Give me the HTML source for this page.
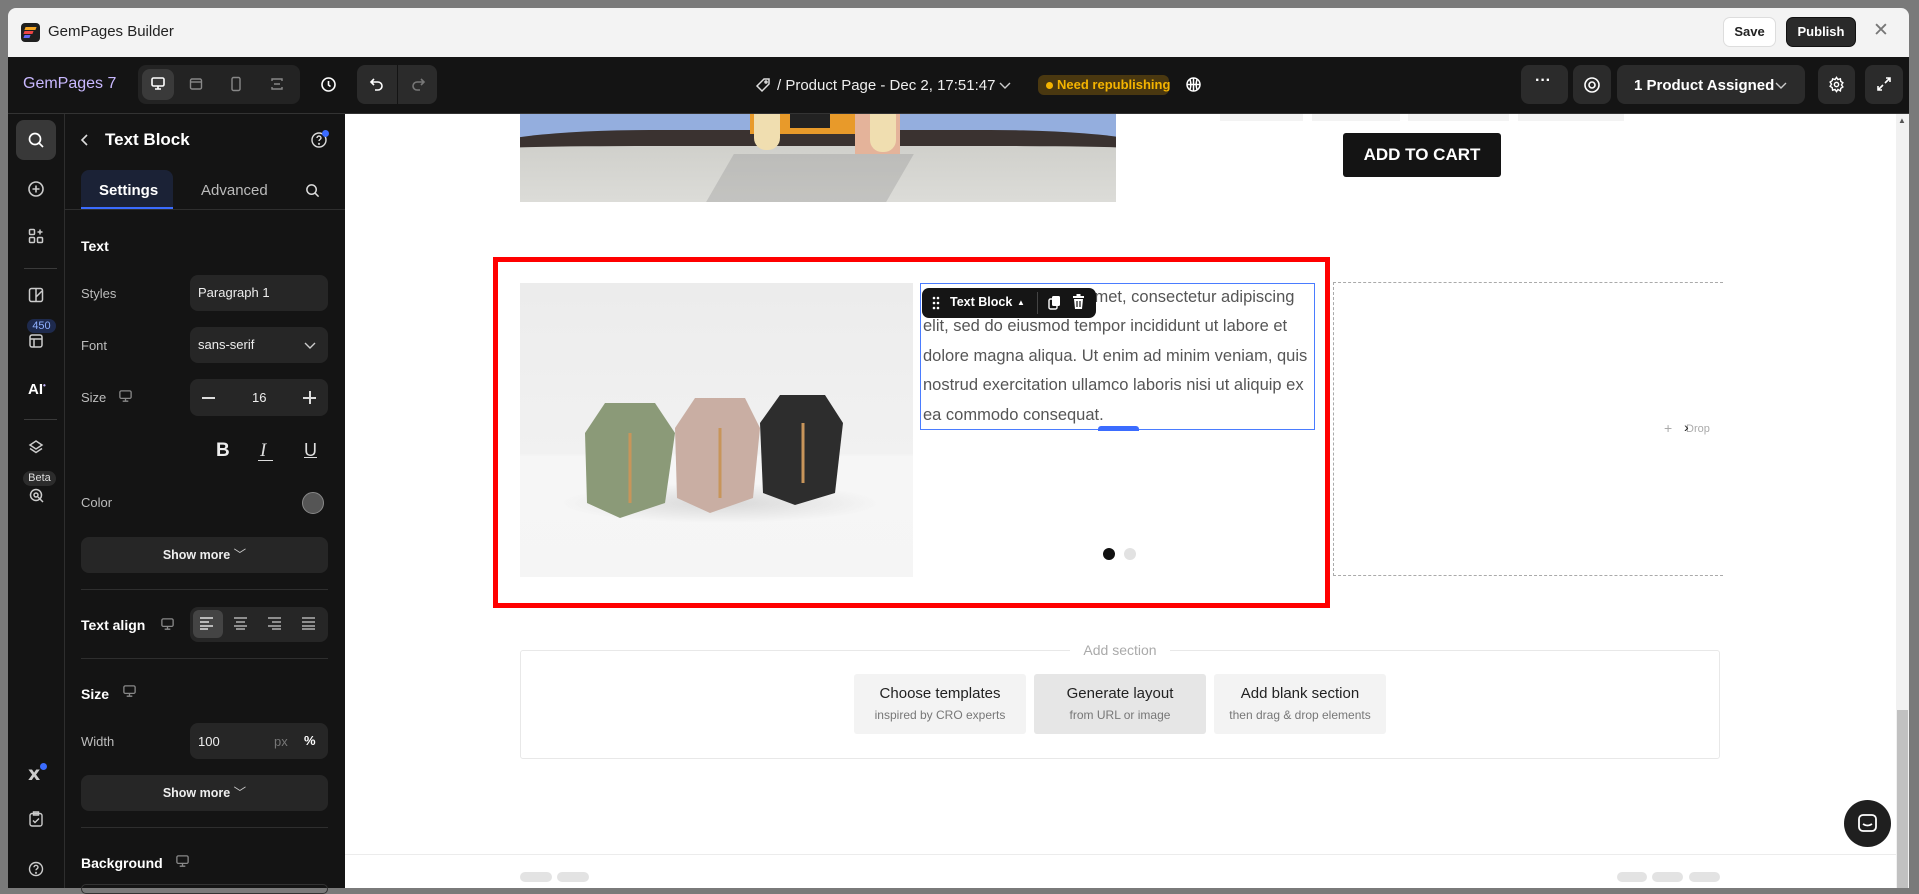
<!DOCTYPE html>
<html><head><meta charset="utf-8"><style>
*{box-sizing:border-box;margin:0;padding:0}
body{width:1919px;height:888px;overflow:hidden;background:#7a7a7a;font-family:"Liberation Sans",Arial,sans-serif;position:relative}
.a{position:absolute}
.t{position:absolute;white-space:nowrap}
.btn{position:absolute;background:#2b2b2b;border-radius:8px}
.ico{position:absolute}
.lbl{position:absolute;color:#bdbdbd;font-size:13px;white-space:nowrap}
.h{position:absolute;color:#fff;font-size:14px;font-weight:700;white-space:nowrap}
.inp{position:absolute;background:#262626;border-radius:8px;color:#eee;font-size:13px}
.div{position:absolute;left:81px;width:247px;height:1px;background:#2e2e2e}
</style></head><body>
<!-- title bar -->
<div class="a" style="left:8px;top:8px;width:1901px;height:49px;background:#f3f3f3;border-radius:8px 8px 0 0"></div>
<div class="a" style="left:21px;top:23px;width:19px;height:19px;background:#1f1f1f;border-radius:4px"></div>
<div class="a" style="left:25px;top:27px;width:11px;height:3px;background:#f5a623;transform:skewX(-20deg)"></div>
<div class="a" style="left:24px;top:31px;width:9px;height:3px;background:#ef4444;transform:skewX(-20deg)"></div>
<div class="a" style="left:24px;top:35px;width:6px;height:3px;background:#6366f1;transform:skewX(-20deg)"></div>
<div class="t" style="left:48px;top:23px;font-size:15px;color:#222;font-weight:500">GemPages Builder</div>
<div class="a" style="left:1723px;top:17px;width:53px;height:30px;background:#fff;border:1px solid #ddd;border-radius:7px;font-size:13px;font-weight:700;color:#222;text-align:center;line-height:28px">Save</div>
<div class="a" style="left:1786px;top:17px;width:70px;height:30px;background:#2a2a2a;border:1px solid #111;border-radius:7px;font-size:13px;font-weight:700;color:#fff;text-align:center;line-height:28px">Publish</div>
<div class="t" style="left:1873px;top:19px;font-size:19px;color:#777">✕</div>
<!-- toolbar -->
<div class="a" style="left:8px;top:57px;width:1901px;height:57px;background:#141414;border-bottom:1px solid #333"></div>
<div class="t" style="left:23px;top:75px;font-size:16px;color:#c9b8ff">GemPages 7</div>
<div class="btn" style="left:138px;top:65px;width:162px;height:39px;background:#232323"></div>
<div class="btn" style="left:142px;top:69px;width:32px;height:31px;background:#3a3a3a"></div>
<svg class="ico" style="left:150px;top:76px" width="16" height="16" viewBox="0 0 16 16" fill="none" stroke="#fff" stroke-width="1.6"><rect x="2" y="2" width="12" height="8" rx="1.5"/><path d="M5 13h6M8 10v3"/></svg>
<svg class="ico" style="left:189px;top:77px" width="14" height="14" viewBox="0 0 14 14" fill="none" stroke="#888" stroke-width="1.4"><rect x="1.5" y="2" width="11" height="10" rx="1.5"/><path d="M1.5 5h11"/></svg>
<svg class="ico" style="left:230px;top:76px" width="12" height="16" viewBox="0 0 12 16" fill="none" stroke="#888" stroke-width="1.4"><rect x="2" y="1.5" width="8" height="13" rx="1.5"/></svg>
<svg class="ico" style="left:270px;top:77px" width="14" height="14" viewBox="0 0 14 14" fill="none" stroke="#888" stroke-width="1.4"><path d="M2 4V2h10v2M2 10v2h10v-2M4 7h6"/></svg>
<svg class="ico" style="left:320px;top:76px" width="17" height="17" viewBox="0 0 17 17" fill="none" stroke="#fff" stroke-width="1.6"><circle cx="8.5" cy="8.5" r="6.5"/><path d="M8.5 5v4l2 1.5"/></svg>
<div class="btn" style="left:357px;top:65px;width:80px;height:39px"></div>
<div class="a" style="left:397px;top:65px;width:1px;height:39px;background:#141414"></div>
<svg class="ico" style="left:369px;top:77px" width="16" height="16" viewBox="0 0 16 16" fill="none" stroke="#fff" stroke-width="1.6"><path d="M5 2L2 5l3 3M2 5h7a4 4 0 010 8H6"/></svg>
<svg class="ico" style="left:410px;top:77px" width="16" height="16" viewBox="0 0 16 16" fill="none" stroke="#777" stroke-width="1.6"><path d="M11 2l3 3-3 3M14 5H7a4 4 0 000 8h3"/></svg>
<svg class="ico" style="left:755px;top:77px" width="16" height="16" viewBox="0 0 16 16" fill="none" stroke="#ddd" stroke-width="1.5"><path d="M9 2h5v5l-7 7-5-5z"/><circle cx="11" cy="5" r="1"/></svg>
<div class="t" style="left:777px;top:77px;font-size:15px;color:#eee">/ Product Page - Dec 2, 17:51:47</div>
<svg class="ico" style="left:999px;top:80px" width="12" height="10" viewBox="0 0 12 10" fill="none" stroke="#ccc" stroke-width="1.4"><path d="M1 3l5 5 5-5"/></svg>
<div class="a" style="left:1038px;top:75px;width:131px;height:20px;background:#4a3810;border-radius:6px"></div>
<div class="a" style="left:1046px;top:82px;width:7px;height:7px;background:#f5b400;border-radius:50%"></div>
<div class="t" style="left:1057px;top:77px;font-size:13px;color:#f5b400;font-weight:600">Need republishing</div>
<svg class="ico" style="left:1185px;top:76px" width="17" height="17" viewBox="0 0 17 17" fill="none" stroke="#fff" stroke-width="1.5"><circle cx="8.5" cy="8.5" r="6.5"/><path d="M2 8.5h13M8.5 2v13M5 3.5c1 3 1 7 0 10M12 3.5c-1 3-1 7 0 10"/></svg>
<div class="btn" style="left:1521px;top:65px;width:47px;height:39px"></div>
<div class="t" style="left:1535px;top:72px;font-size:16px;color:#fff;font-weight:700">···</div>
<div class="btn" style="left:1573px;top:65px;width:38px;height:39px"></div>
<svg class="ico" style="left:1583px;top:76px" width="18" height="18" viewBox="0 0 18 18" fill="none" stroke="#fff" stroke-width="1.6"><circle cx="9" cy="9" r="7"/><circle cx="9" cy="9" r="3"/></svg>
<div class="btn" style="left:1617px;top:65px;width:188px;height:39px"></div>
<div class="t" style="left:1634px;top:77px;font-size:15px;color:#fff;font-weight:600">1 Product Assigned</div>
<svg class="ico" style="left:1775px;top:80px" width="12" height="10" viewBox="0 0 12 10" fill="none" stroke="#ccc" stroke-width="1.4"><path d="M1 3l5 5 5-5"/></svg>
<div class="btn" style="left:1818px;top:65px;width:37px;height:39px"></div>
<svg class="ico" style="left:1828px;top:76px" width="17" height="17" viewBox="0 0 24 24" fill="none" stroke="#fff" stroke-width="2"><circle cx="12" cy="12" r="3"/><path d="M12 2l2 3 3.5-1 .5 3.5 3 2-2 3 2 3-3 2-.5 3.5L14 19l-2 3-2-3-3.5 1L6 16.5l-3-2 2-3-2-3 3-2L6.5 4 10 5z"/></svg>
<div class="btn" style="left:1865px;top:65px;width:38px;height:39px"></div>
<svg class="ico" style="left:1876px;top:76px" width="16" height="16" viewBox="0 0 16 16" fill="none" stroke="#fff" stroke-width="1.6"><path d="M10 2h4v4M14 2L9 7M6 14H2v-4M2 14l5-5"/></svg>
<!-- left rail -->
<div class="a" style="left:8px;top:114px;width:57px;height:774px;background:#141414;border-right:1px solid #2e2e2e"></div>
<div class="a" style="left:16px;top:120px;width:40px;height:40px;background:#383838;border-radius:8px"></div>
<svg class="ico" style="left:27px;top:131px" width="18" height="18" viewBox="0 0 18 18" fill="none" stroke="#fff" stroke-width="1.7"><circle cx="8" cy="8" r="5.5"/><path d="M12 12l4 4"/></svg>
<svg class="ico" style="left:27px;top:180px" width="18" height="18" viewBox="0 0 18 18" fill="none" stroke="#ccc" stroke-width="1.6"><circle cx="9" cy="9" r="7"/><path d="M9 5.5v7M5.5 9h7"/></svg>
<svg class="ico" style="left:28px;top:228px" width="16" height="16" viewBox="0 0 16 16" fill="none" stroke="#ccc" stroke-width="1.5"><rect x="1.5" y="1.5" width="5" height="5" rx="1"/><rect x="1.5" y="9.5" width="5" height="5" rx="1"/><rect x="9.5" y="9.5" width="5" height="5" rx="1"/><path d="M12 1.5v5M9.5 4h5"/></svg>
<div class="a" style="left:24px;top:268px;width:33px;height:1px;background:#3a3a3a"></div>
<svg class="ico" style="left:28px;top:287px" width="16" height="16" viewBox="0 0 16 16" fill="none" stroke="#ccc" stroke-width="1.5"><rect x="1.5" y="1.5" width="13" height="13" rx="2"/><path d="M8 1.5v13M8 10l6-6"/></svg>
<div class="a" style="left:27px;top:319px;width:29px;height:14px;background:#1e2a4d;border-radius:7px;color:#8fb0ff;font-size:11px;text-align:center;line-height:14px">450</div>
<svg class="ico" style="left:29px;top:334px" width="14" height="14" viewBox="0 0 14 14" fill="none" stroke="#ccc" stroke-width="1.5"><rect x="1" y="1" width="12" height="12" rx="2"/><path d="M1 5h12M5 5v8"/></svg>
<div class="t" style="left:28px;top:381px;font-size:15px;color:#fff;font-weight:700">AI<span style="font-size:8px;vertical-align:top;color:#c9b8ff">•</span></div>
<div class="a" style="left:24px;top:419px;width:33px;height:1px;background:#3a3a3a"></div>
<svg class="ico" style="left:28px;top:439px" width="16" height="16" viewBox="0 0 16 16" fill="none" stroke="#ccc" stroke-width="1.5"><path d="M8 2l6 4-6 4-6-4zM2 9.5l6 4 6-4"/></svg>
<div class="a" style="left:23px;top:471px;width:33px;height:15px;background:#2c2c2c;border-radius:8px;color:#ddd;font-size:11px;text-align:center;line-height:15px">Beta</div>
<svg class="ico" style="left:29px;top:488px" width="16" height="16" viewBox="0 0 16 16" fill="none" stroke="#ccc" stroke-width="1.5"><circle cx="7" cy="7" r="5.5"/><circle cx="7" cy="7" r="2"/><path d="M9 9l5 5"/></svg>
<div class="t" style="left:28px;top:763px;font-size:19px;color:#ccc;font-weight:900;font-family:'DejaVu Sans',sans-serif">x</div>
<div class="a" style="left:40px;top:763px;width:7px;height:7px;background:#3b6cff;border-radius:50%"></div>
<svg class="ico" style="left:29px;top:811px" width="14" height="16" viewBox="0 0 14 16" fill="none" stroke="#ccc" stroke-width="1.4"><rect x="1" y="2.5" width="12" height="12.5" rx="2"/><path d="M4.5 1h5v3h-5zM4 9.5l2 2 4-4"/></svg>
<svg class="ico" style="left:28px;top:861px" width="16" height="16" viewBox="0 0 16 16" fill="none" stroke="#ccc" stroke-width="1.4"><circle cx="8" cy="8" r="6.5"/><path d="M6 6.3a2 2 0 114 0c0 1.5-2 1.5-2 3"/><circle cx="8" cy="11.8" r=".4"/></svg>
<!-- panel -->
<div class="a" style="left:65px;top:114px;width:280px;height:774px;background:#141414"></div>
<svg class="ico" style="left:79px;top:133px" width="12" height="14" viewBox="0 0 12 14" fill="none" stroke="#ddd" stroke-width="1.6"><path d="M8 2L3 7l5 5"/></svg>
<div class="t" style="left:105px;top:130px;font-size:17px;color:#fff;font-weight:600">Text Block</div>
<svg class="ico" style="left:310px;top:131px" width="18" height="18" viewBox="0 0 18 18" fill="none" stroke="#ddd" stroke-width="1.4"><circle cx="9" cy="9" r="7"/><path d="M7 7a2 2 0 114 0c0 1.5-2 1.5-2 3"/><circle cx="9" cy="12.8" r=".4"/></svg>
<div class="a" style="left:322px;top:130px;width:7px;height:7px;background:#3b6cff;border-radius:50%"></div>
<div class="a" style="left:81px;top:170px;width:92px;height:40px;background:#1b2236;border-radius:8px 8px 0 0;border-bottom:3px solid #3b6cff"></div>
<div class="t" style="left:99px;top:182px;font-size:15px;color:#fff;font-weight:600">Settings</div>
<div class="t" style="left:201px;top:182px;font-size:15px;color:#bbb;font-weight:500">Advanced</div>
<svg class="ico" style="left:305px;top:183px" width="15" height="15" viewBox="0 0 16 16" fill="none" stroke="#ddd" stroke-width="1.6"><circle cx="7" cy="7" r="5"/><path d="M11 11l3.5 3.5"/></svg>
<div class="a" style="left:65px;top:209px;width:280px;height:1px;background:#2e2e2e"></div>
<div class="h" style="left:81px;top:238px">Text</div>
<div class="lbl" style="left:81px;top:286px">Styles</div>
<div class="inp" style="left:190px;top:275px;width:138px;height:36px;padding:10px 8px">Paragraph 1</div>
<div class="lbl" style="left:81px;top:338px">Font</div>
<div class="inp" style="left:190px;top:327px;width:138px;height:36px;padding:10px 8px">sans-serif</div>
<svg class="ico" style="left:304px;top:341px" width="12" height="9" viewBox="0 0 12 9" fill="none" stroke="#ccc" stroke-width="1.4"><path d="M1 2l5 5 5-5"/></svg>
<div class="lbl" style="left:81px;top:390px">Size</div>
<svg class="ico" style="left:118px;top:389px" width="15" height="15" viewBox="0 0 16 16" fill="none" stroke="#888" stroke-width="1.4"><rect x="2" y="2" width="12" height="8" rx="1.5"/><path d="M5 13h6M8 10v3"/></svg>
<div class="inp" style="left:190px;top:379px;width:138px;height:37px"></div>
<div class="a" style="left:202px;top:397px;width:13px;height:2px;background:#ddd"></div>
<div class="t" style="left:252px;top:390px;font-size:13px;color:#eee">16</div>
<div class="a" style="left:303px;top:397px;width:13px;height:2px;background:#ddd"></div>
<div class="a" style="left:309px;top:391px;width:2px;height:13px;background:#ddd"></div>
<div class="t" style="left:216px;top:440px;font-size:19px;color:#eee;font-weight:700">B</div>
<div class="t" style="left:260px;top:440px;font-size:19px;color:#ddd;font-style:italic;font-family:'Liberation Serif',serif">I</div>
<div class="a" style="left:258px;top:460px;width:15px;height:1px;background:#ddd"></div>
<div class="t" style="left:304px;top:440px;font-size:18px;color:#ddd;text-decoration:underline">U</div>
<div class="lbl" style="left:81px;top:495px">Color</div>
<div class="a" style="left:302px;top:492px;width:22px;height:22px;background:#555;border:1px solid #888;border-radius:50%"></div>
<div class="inp" style="left:81px;top:537px;width:247px;height:36px;text-align:center;font-weight:700;line-height:36px;font-size:12.5px">Show more <span style="font-weight:400;color:#ccc">﹀</span></div>
<div class="div" style="top:589px"></div>
<div class="h" style="left:81px;top:617px">Text align</div>
<svg class="ico" style="left:160px;top:617px" width="15" height="15" viewBox="0 0 16 16" fill="none" stroke="#888" stroke-width="1.4"><rect x="2" y="2" width="12" height="8" rx="1.5"/><path d="M5 13h6M8 10v3"/></svg>
<div class="inp" style="left:190px;top:607px;width:138px;height:35px"></div>
<div class="a" style="left:193px;top:610px;width:30px;height:28px;background:#444;border-radius:6px"></div>
<svg class="ico" style="left:199px;top:616px" width="120" height="14" viewBox="0 0 120 14" fill="none" stroke="#ccc" stroke-width="1.2"><path d="M1 2h13M1 6h9M1 10h13M1 13h8" stroke="#fff"/><path d="M35 2h13M37 6h9M35 10h13M37 13h9M69 2h13M73 6h9M69 10h13M73 13h9M103 2h13M103 6h13M103 10h13M103 13h13"/></svg>
<div class="div" style="top:658px"></div>
<div class="h" style="left:81px;top:686px">Size</div>
<svg class="ico" style="left:122px;top:684px" width="15" height="15" viewBox="0 0 16 16" fill="none" stroke="#888" stroke-width="1.4"><rect x="2" y="2" width="12" height="8" rx="1.5"/><path d="M5 13h6M8 10v3"/></svg>
<div class="lbl" style="left:81px;top:734px">Width</div>
<div class="inp" style="left:190px;top:723px;width:138px;height:36px;padding:11px 8px">100</div>
<div class="t" style="left:274px;top:734px;font-size:13px;color:#777">px</div>
<div class="t" style="left:304px;top:733px;font-size:13px;color:#fff;font-weight:700">%</div>
<div class="inp" style="left:81px;top:775px;width:247px;height:36px;text-align:center;font-weight:700;line-height:36px;font-size:12.5px">Show more <span style="font-weight:400;color:#ccc">﹀</span></div>
<div class="div" style="top:827px"></div>
<div class="h" style="left:81px;top:855px">Background</div>
<svg class="ico" style="left:175px;top:854px" width="15" height="15" viewBox="0 0 16 16" fill="none" stroke="#888" stroke-width="1.4"><rect x="2" y="2" width="12" height="8" rx="1.5"/><path d="M5 13h6M8 10v3"/></svg>
<div class="a" style="left:81px;top:884px;width:247px;height:10px;border:1px solid #333;border-radius:8px"></div>
<!-- canvas -->
<div class="a" style="left:345px;top:114px;width:1551px;height:774px;background:#fff"></div>
<div class="a" style="left:1896px;top:114px;width:13px;height:774px;background:#f1f1f1"></div>
<div class="a" style="left:1897px;top:710px;width:11px;height:178px;background:#c1c1c1"></div>
<div class="t" style="left:1898px;top:116px;font-size:8px;color:#555">▲</div>
<div class="a" style="left:1909px;top:114px;width:10px;height:774px;background:#7a7a7a"></div>
<!-- skate image -->
<div class="a" style="left:520px;top:114px;width:596px;height:88px;overflow:hidden;background:linear-gradient(#c9c9c4,#dcdcd8)">
 <div class="a" style="left:0;top:0;width:596px;height:30px;background:#94aede"></div>
 <div class="a" style="left:-40px;top:16px;width:680px;height:40px;border-radius:50%/100%;border-top:16px solid #3a3230;"></div>
 <div class="a" style="left:200px;top:40px;width:180px;height:48px;background:rgba(150,150,150,.35);transform:skewX(-30deg)"></div>
 <div class="a" style="left:230px;top:0;width:130px;height:20px;background:#e89a2a"></div>
 <div class="a" style="left:270px;top:0;width:40px;height:14px;background:#222"></div>
 <div class="a" style="left:335px;top:0;width:45px;height:40px;background:#e4b39a"></div>
 <div class="a" style="left:234px;top:0;width:26px;height:36px;background:#f0deb0;border-radius:0 0 12px 12px"></div>
 <div class="a" style="left:350px;top:0;width:26px;height:38px;background:#f0deb0;border-radius:0 0 12px 12px"></div>
</div>
<div class="a" style="left:1220px;top:114px;width:83px;height:7px;background:#f3f3f3"></div>
<div class="a" style="left:1312px;top:114px;width:88px;height:7px;background:#f3f3f3"></div>
<div class="a" style="left:1408px;top:114px;width:101px;height:7px;background:#f3f3f3"></div>
<div class="a" style="left:1518px;top:114px;width:106px;height:7px;background:#f3f3f3"></div>
<div class="a" style="left:1343px;top:133px;width:158px;height:44px;background:#141414;border-radius:3px;color:#fff;font-weight:700;font-size:17px;text-align:center;line-height:44px">ADD TO CART</div>
<!-- red section -->
<div class="a" style="left:493px;top:257px;width:837px;height:351px;border:5px solid #ff0000"></div>
<div class="a" style="left:520px;top:283px;width:393px;height:294px;background:linear-gradient(180deg,#ececec 0%,#f1f1f1 58%,#f6f6f6 59%,#f5f5f5 100%);overflow:hidden">
 <div class="a" style="left:40px;top:200px;width:320px;height:40px;background:radial-gradient(ellipse at center,rgba(0,0,0,.12),rgba(0,0,0,0) 70%)"></div>
 <svg class="a" style="left:55px;top:110px" width="290" height="130" viewBox="0 0 290 130">
  <polygon points="10,40 30,10 80,10 100,40 90,110 45,125 12,110" fill="#8b9a78"/>
  <polygon points="100,35 120,5 170,5 185,35 178,105 135,120 102,105" fill="#c9aea3"/>
  <polygon points="185,30 205,2 250,2 268,30 260,100 220,112 188,100" fill="#2d2d2d"/>
  <path d="M55 40v70M145 35v70M228 30v60" stroke="#c8955a" stroke-width="3"/>
 </svg>
</div>
<div class="a" style="left:920px;top:283px;width:395px;height:147px;border:1.5px solid #4a7cff"></div>
<div class="a" style="left:1098px;top:426px;width:41px;height:5px;background:#3b6cff;border-radius:3px 3px 0 0"></div>
<div class="a" style="left:923px;top:283px;width:390px;font-size:16.5px;line-height:29.4px;color:#555;padding-top:0">
<span style="color:#fff">Lorem ipsum dolor sit a</span>met, consectetur adipiscing elit, sed do eiusmod tempor incididunt ut labore et dolore magna aliqua. Ut enim ad minim veniam, quis nostrud exercitation ullamco laboris nisi ut aliquip ex ea commodo consequat.</div>
<div class="a" style="left:922px;top:288px;width:174px;height:30px;background:#151515;border-radius:7px"></div>
<svg class="ico" style="left:932px;top:296px" width="8" height="14" viewBox="0 0 8 14" fill="#fff"><circle cx="2" cy="2" r="1.3"/><circle cx="6" cy="2" r="1.3"/><circle cx="2" cy="7" r="1.3"/><circle cx="6" cy="7" r="1.3"/><circle cx="2" cy="12" r="1.3"/><circle cx="6" cy="12" r="1.3"/></svg>
<div class="t" style="left:950px;top:295px;font-size:12.5px;color:#fff;font-weight:700">Text Block</div>
<div class="t" style="left:1017px;top:298px;font-size:8px;color:#fff">▲</div>
<div class="a" style="left:1037px;top:292px;width:1px;height:22px;background:#444"></div>
<svg class="ico" style="left:1048px;top:295px" width="13" height="15" viewBox="0 0 13 15" fill="#fff"><rect x="4" y="1" width="8" height="10" rx="1.5"/><rect x="1" y="4" width="8" height="10" rx="1.5" fill="none" stroke="#fff" stroke-width="1.4"/></svg>
<svg class="ico" style="left:1072px;top:294px" width="13" height="16" viewBox="0 0 13 16" fill="#fff"><rect x="1" y="2" width="11" height="2"/><rect x="4.5" y="0" width="4" height="2"/><path d="M2 5h9l-1 10H3z"/><path d="M5 7v6M8 7v6" stroke="#151515" stroke-width="1.2"/></svg>
<div class="a" style="left:1103px;top:548px;width:12px;height:12px;background:#111;border-radius:50%"></div>
<div class="a" style="left:1124px;top:548px;width:12px;height:12px;background:#e2e2e2;border-radius:50%"></div>
<div class="a" style="left:1333px;top:282px;width:390px;height:294px;border:1px dashed #aaa;border-right:none"></div>
<div class="t" style="left:1664px;top:420px;font-size:14px;color:#aaa">+</div>
<div class="t" style="left:1686px;top:423px;font-size:11px;color:#aaa">Drop</div>
<div class="t" style="left:1684px;top:419px;font-size:14px;color:#222">›</div>
<!-- add section -->
<div class="a" style="left:520px;top:650px;width:1200px;height:109px;border:1px solid #e8e8e8;border-radius:3px"></div>
<div class="a" style="left:1070px;top:640px;width:100px;height:20px;background:#fff;color:#aaa;font-size:14px;text-align:center;line-height:20px">Add section</div>
<div class="a" style="left:854px;top:674px;width:172px;height:60px;background:#f3f3f3;border-radius:3px;text-align:center"><div style="font-size:15px;color:#222;margin-top:11px">Choose templates</div><div style="font-size:12px;color:#777;margin-top:6px">inspired by CRO experts</div></div>
<div class="a" style="left:1034px;top:674px;width:172px;height:60px;background:#e6e6e6;border-radius:3px;text-align:center"><div style="font-size:15px;color:#222;margin-top:11px">Generate layout</div><div style="font-size:12px;color:#777;margin-top:6px">from URL or image</div></div>
<div class="a" style="left:1214px;top:674px;width:172px;height:60px;background:#f3f3f3;border-radius:3px;text-align:center"><div style="font-size:15px;color:#222;margin-top:11px">Add blank section</div><div style="font-size:12px;color:#777;margin-top:6px">then drag &amp; drop elements</div></div>
<div class="a" style="left:345px;top:854px;width:1551px;height:1px;background:#ececec"></div>
<div class="a" style="left:520px;top:872px;width:32px;height:10px;background:#e3e3e3;border-radius:5px"></div>
<div class="a" style="left:557px;top:872px;width:32px;height:10px;background:#e3e3e3;border-radius:5px"></div>
<div class="a" style="left:1617px;top:872px;width:30px;height:10px;background:#e3e3e3;border-radius:5px"></div>
<div class="a" style="left:1652px;top:872px;width:31px;height:10px;background:#e3e3e3;border-radius:5px"></div>
<div class="a" style="left:1689px;top:872px;width:31px;height:10px;background:#e3e3e3;border-radius:5px"></div>
<div class="a" style="left:1844px;top:800px;width:47px;height:47px;background:#1f1f1f;border-radius:50%"></div>
<svg class="ico" style="left:1857px;top:813px" width="21" height="21" viewBox="0 0 21 21" fill="none" stroke="#fff" stroke-width="1.8"><rect x="2" y="2" width="17" height="16" rx="4"/><path d="M6 11c3 2 6 2 9 0"/></svg>
</body></html>
